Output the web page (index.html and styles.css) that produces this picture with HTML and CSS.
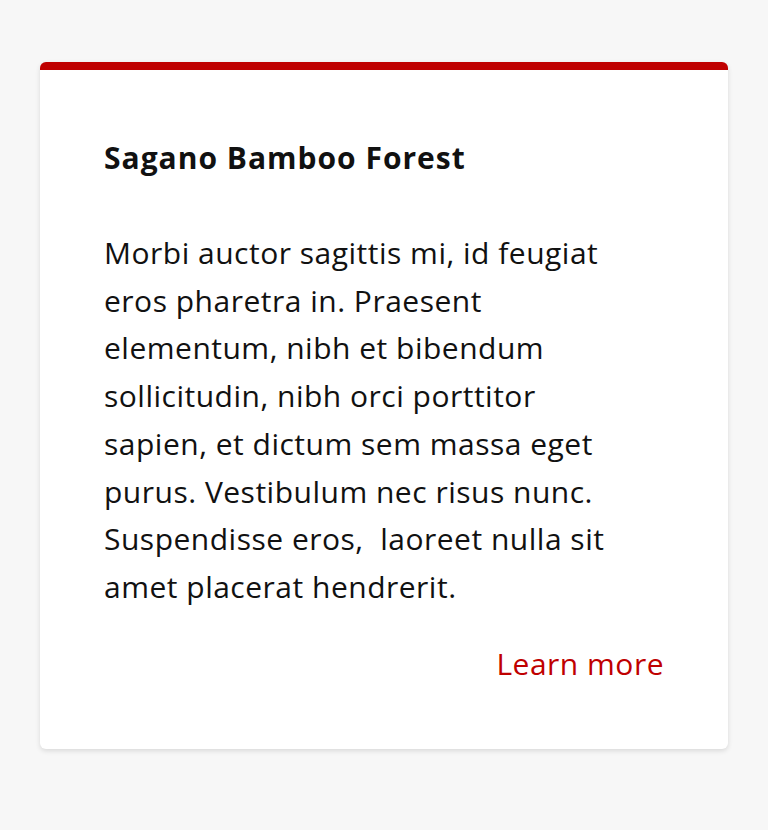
FILE: index.html
```html
<!DOCTYPE html>
<html lang="en">
<head>
<meta charset="utf-8">
<title>Card</title>
<link rel="stylesheet" href="styles.css">
</head>
<body>
<main class="page">
  <article class="card">
    <h2 class="card-title">Sagano Bamboo Forest</h2>
    <p class="card-text">Morbi auctor sagittis mi, id feugiat eros pharetra in. Praesent elementum, nibh et bibendum sollicitudin, nibh orci porttitor sapien, et dictum sem massa eget purus. Vestibulum nec risus nunc. Suspendisse eros,&nbsp; laoreet nulla sit amet placerat hendrerit.</p>
    <div class="card-actions">
      <a class="card-link" href="#">Learn more</a>
    </div>
  </article>
</main>
</body>
</html>
```

FILE: styles.css
```css
html, body {
  margin: 0;
  padding: 0;
  background: #f7f7f7;
}
body {
  font-family: "Open Sans", "Noto Sans", sans-serif;
  color: #111;
}
.page {
  padding: 62px 40px 40px;
}
.card {
  background: #fff;
  border-top: 8px solid #bf0000;
  border-radius: 6px;
  box-shadow: 0 2px 5px rgba(0, 0, 0, 0.12);
  padding: 70px 64px 61px;
}
.card-title {
  margin: 0 0 53px;
  font-size: 30px;
  font-weight: 700;
  line-height: 36px;
  letter-spacing: 1px;
  color: #111;
}
.card-text {
  max-width: 530px;
  margin: 0;
  font-size: 30px;
  line-height: 47.7px;
  letter-spacing: 0.5px;
}
.card-actions {
  display: flex;
  justify-content: flex-end;
  margin-top: 29px;
}
.card-link {
  color: #bf0000;
  text-decoration: none;
  font-size: 30px;
  line-height: 48px;
  letter-spacing: 0.5px;
}
```
